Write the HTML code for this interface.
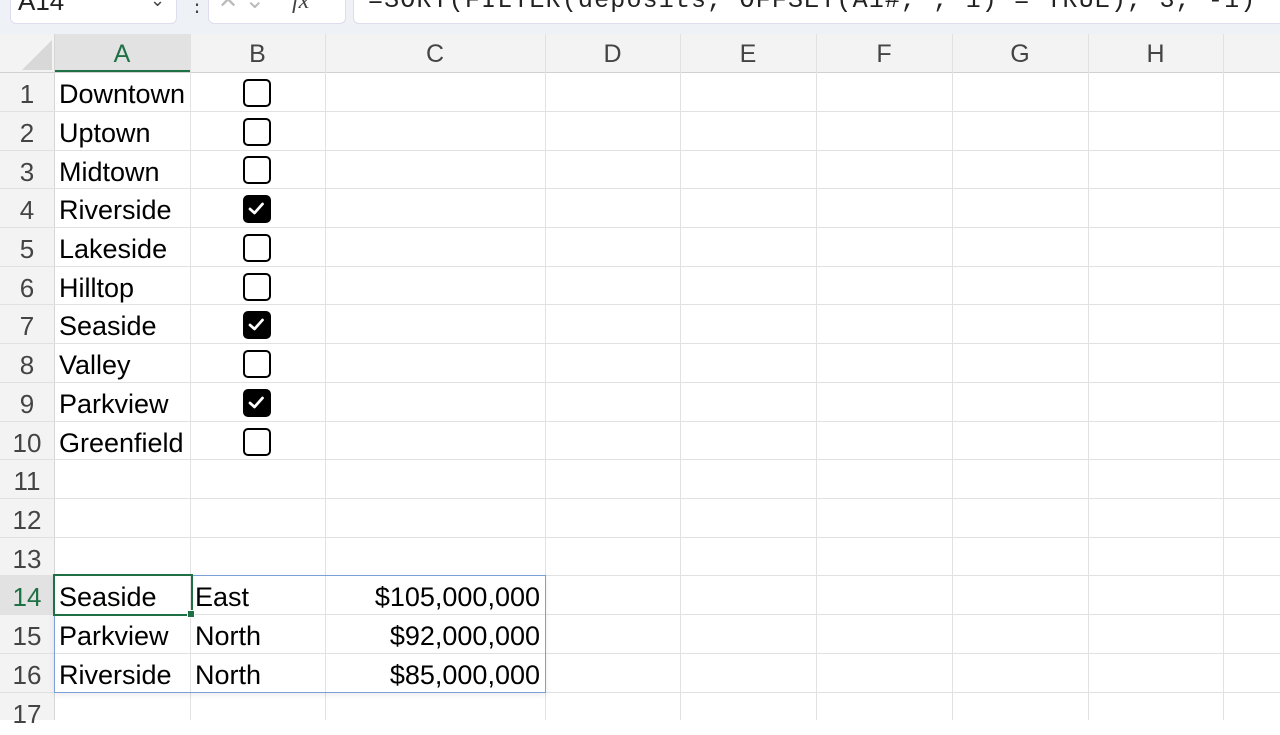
<!DOCTYPE html>
<html><head><style>
body{margin:0;width:1280px;height:720px;overflow:hidden;background:#fff;font-family:"Liberation Sans",Arial,sans-serif;position:relative}
.a{position:absolute}
.vl{position:absolute;top:34px;height:686px;width:1px;background:#e1e1e1}
.hl{position:absolute;left:0;width:1280px;height:1px;background:#e1e1e1}
.ch{position:absolute;top:34px;height:38px;line-height:40px;text-align:center;font-size:25px;color:#444}
.rn{position:absolute;left:0;width:54px;text-align:center;font-size:26px;color:#444;height:38px;line-height:42px}
.t{position:absolute;font-size:27px;color:#000;height:38px;line-height:42px;white-space:nowrap}
.cb{position:absolute;left:243px;width:28px;height:28px;border:2.8px solid #000;border-radius:5px;box-sizing:border-box}
.cb.on{background:#000}
.cb.on svg{position:absolute;left:1px;top:1px}
</style></head><body>
<div class="a" style="left:0;top:0;width:1280px;height:34px;background:#eef1f5"></div>
<div class="a" style="left:10px;top:-10px;width:165px;height:32px;background:#fff;border-radius:6px;border:1px solid #dde"></div>
<div class="a" style="left:18px;top:-14px;font-size:26px;color:#222">A14</div>
<div class="a" style="left:150px;top:-10px;font-size:18px;color:#444">&#8964;</div>
<div class="a" style="left:187px;top:-8px;font-size:20px;color:#444">⋮</div>
<div class="a" style="left:208px;top:-10px;width:136px;height:32px;background:#fff;border-radius:6px;border:1px solid #dde"></div>
<div class="a" style="left:218px;top:-14px;font-size:24px;color:#bbb">✕ &#8964;</div>
<div class="a" style="left:292px;top:-12px;font-size:24px;color:#444;font-style:italic;font-family:'Liberation Serif',serif">fx</div>
<div class="a" style="left:353px;top:-10px;width:935px;height:32px;background:#fff;border-radius:6px;border:1px solid #dde"></div>
<div class="a" style="left:368px;top:-14px;font-size:25px;color:#222;font-family:'Liberation Mono',monospace;letter-spacing:1.15px">=SORT(FILTER(deposits, OFFSET(A1#, , 1) = TRUE), 3, -1)</div>
<div class="a" style="left:0;top:34px;width:1280px;height:38px;background:#f3f3f3"></div>
<div class="a" style="left:54px;top:34px;width:136px;height:38px;background:#e2e2e2"></div>
<div class="a" style="left:54px;top:70px;width:136px;height:2px;background:#1e7145"></div>
<div class="a" style="left:0;top:34px;width:54px;height:686px;background:#f3f3f3"></div>
<div class="a" style="left:0;top:576px;width:54px;height:38px;background:#e2e2e2"></div>
<svg class="a" style="left:16px;top:40px" width="36" height="30"><polygon points="36,0 36,30 6,30" fill="#d8d8d8"/></svg>
<div class="hl" style="top:72px;background:#d0d0d0"></div>
<div class="vl" style="left:54px;background:#d6d6d6"></div>
<div class="vl" style="left:190px"></div><div class="vl" style="left:325px"></div><div class="vl" style="left:545px"></div><div class="vl" style="left:680px"></div><div class="vl" style="left:816px"></div><div class="vl" style="left:952px"></div><div class="vl" style="left:1088px"></div><div class="vl" style="left:1223px"></div>
<div class="ch" style="left:54px;width:136px;color:#1e7145">A</div>
<div class="ch" style="left:190px;width:135px">B</div>
<div class="ch" style="left:325px;width:220px">C</div>
<div class="ch" style="left:545px;width:135px">D</div>
<div class="ch" style="left:680px;width:136px">E</div>
<div class="ch" style="left:816px;width:136px">F</div>
<div class="ch" style="left:952px;width:136px">G</div>
<div class="ch" style="left:1088px;width:135px">H</div>
<div class="hl" style="top:111px"></div><div class="hl" style="top:150px"></div><div class="hl" style="top:188px"></div><div class="hl" style="top:227px"></div><div class="hl" style="top:266px"></div><div class="hl" style="top:304px"></div><div class="hl" style="top:343px"></div><div class="hl" style="top:382px"></div><div class="hl" style="top:421px"></div><div class="hl" style="top:459px"></div><div class="hl" style="top:498px"></div><div class="hl" style="top:537px"></div><div class="hl" style="top:575px"></div><div class="hl" style="top:614px"></div><div class="hl" style="top:653px"></div><div class="hl" style="top:692px"></div>
<div class="rn" style="top:73px">1</div><div class="rn" style="top:112px">2</div><div class="rn" style="top:151px">3</div><div class="rn" style="top:189px">4</div><div class="rn" style="top:228px">5</div><div class="rn" style="top:267px">6</div><div class="rn" style="top:305px">7</div><div class="rn" style="top:344px">8</div><div class="rn" style="top:383px">9</div><div class="rn" style="top:422px">10</div><div class="rn" style="top:460px">11</div><div class="rn" style="top:499px">12</div><div class="rn" style="top:538px">13</div><div class="rn" style="top:576px;color:#1e7145">14</div><div class="rn" style="top:615px">15</div><div class="rn" style="top:654px">16</div><div class="rn" style="top:693px">17</div>
<div class="t" style="left:59px;top:73px">Downtown</div>
<div class="t" style="left:59px;top:112px">Uptown</div>
<div class="t" style="left:59px;top:151px">Midtown</div>
<div class="t" style="left:59px;top:189px">Riverside</div>
<div class="t" style="left:59px;top:228px">Lakeside</div>
<div class="t" style="left:59px;top:267px">Hilltop</div>
<div class="t" style="left:59px;top:305px">Seaside</div>
<div class="t" style="left:59px;top:344px">Valley</div>
<div class="t" style="left:59px;top:383px">Parkview</div>
<div class="t" style="left:59px;top:422px">Greenfield</div>
<div class="cb" style="top:79px"></div>
<div class="cb" style="top:118px"></div>
<div class="cb" style="top:156px"></div>
<div class="cb on" style="top:195px"><svg width="21" height="21" viewBox="0 0 21 21"><path d="M4 11 L8.5 15 L16.5 6" stroke="#fff" stroke-width="2.8" fill="none" stroke-linecap="round" stroke-linejoin="round"/></svg></div>
<div class="cb" style="top:234px"></div>
<div class="cb" style="top:273px"></div>
<div class="cb on" style="top:311px"><svg width="21" height="21" viewBox="0 0 21 21"><path d="M4 11 L8.5 15 L16.5 6" stroke="#fff" stroke-width="2.8" fill="none" stroke-linecap="round" stroke-linejoin="round"/></svg></div>
<div class="cb" style="top:350px"></div>
<div class="cb on" style="top:389px"><svg width="21" height="21" viewBox="0 0 21 21"><path d="M4 11 L8.5 15 L16.5 6" stroke="#fff" stroke-width="2.8" fill="none" stroke-linecap="round" stroke-linejoin="round"/></svg></div>
<div class="cb" style="top:428px"></div>
<div class="a" style="left:54px;top:575px;width:490px;height:116px;border:1.5px solid #7aa0d8;box-shadow:0 2px 6px rgba(0,0,0,0.08)"></div>
<div class="a" style="left:53px;top:574px;width:136px;height:38px;border:2px solid #1e7145"></div>
<div class="a" style="left:187px;top:610px;width:6px;height:6px;background:#1e7145;border:1px solid #fff"></div>
<div class="t" style="left:59px;top:576px">Seaside</div>
<div class="t" style="left:59px;top:615px">Parkview</div>
<div class="t" style="left:59px;top:654px">Riverside</div>
<div class="t" style="left:195px;top:576px">East</div>
<div class="t" style="left:195px;top:615px">North</div>
<div class="t" style="left:195px;top:654px">North</div>
<div class="t" style="right:740px;top:576px">$105,000,000</div>
<div class="t" style="right:740px;top:615px">$92,000,000</div>
<div class="t" style="right:740px;top:654px">$85,000,000</div>
</body></html>
